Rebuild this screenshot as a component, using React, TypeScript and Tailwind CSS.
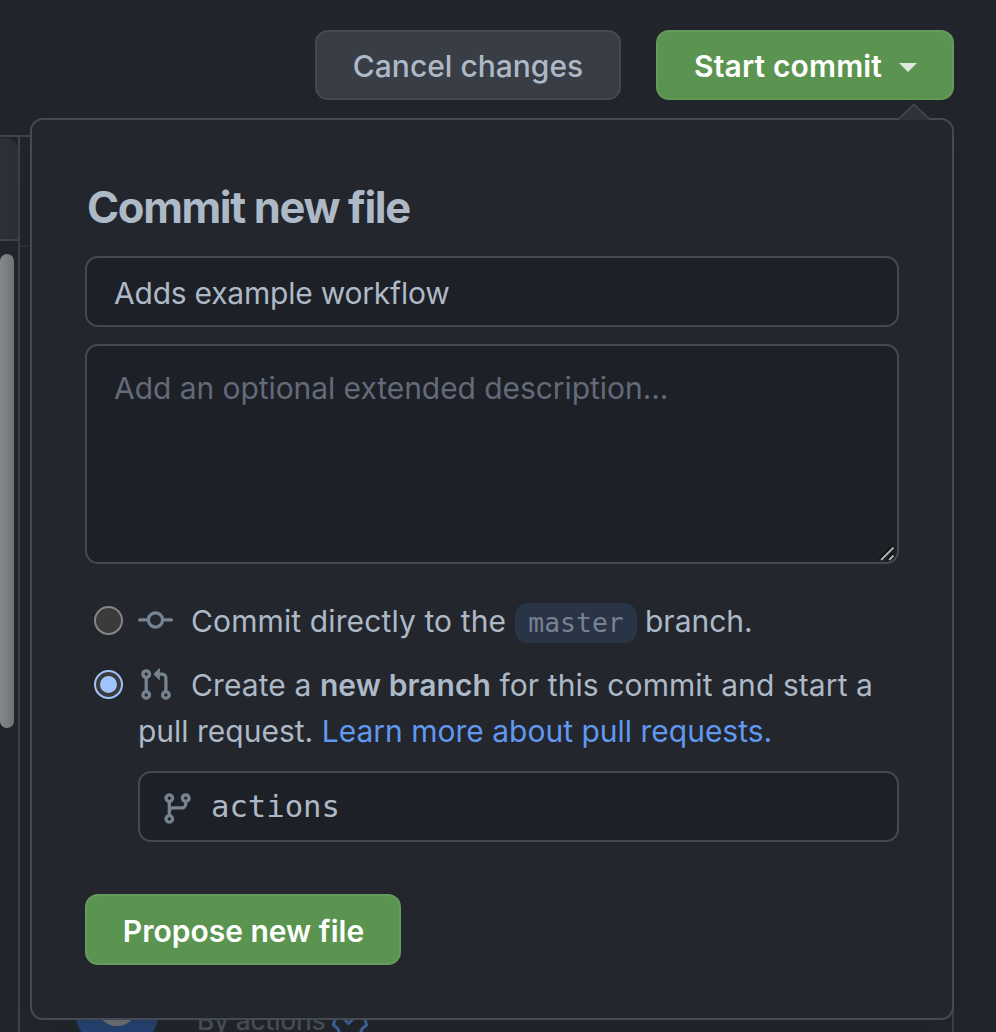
import type { ReactNode } from "react";

const icons = {
  commit:
    "M10.5 7.75a2.5 2.5 0 11-5 0 2.5 2.5 0 015 0zm1.43.75a4.002 4.002 0 01-7.86 0H.75a.75.75 0 110-1.5h3.32a4.001 4.001 0 017.86 0h3.32a.75.75 0 110 1.5h-3.32z",
  pullRequest:
    "M7.177 3.073L9.573.677A.25.25 0 0110 .854v4.792a.25.25 0 01-.427.177L7.177 3.427a.25.25 0 010-.354zM3.75 2.5a.75.75 0 100 1.5.75.75 0 000-1.5zm-2.25.75a2.25 2.25 0 113 2.122v5.256a2.251 2.251 0 11-1.5 0V5.372A2.25 2.25 0 011.5 3.25zM11 2.5h-1V4h1a1 1 0 011 1v5.628a2.251 2.251 0 101.5 0V5A2.5 2.5 0 0011 2.5zm1 10.25a.75.75 0 111.5 0 .75.75 0 01-1.5 0zM3.75 12a.75.75 0 100 1.5.75.75 0 000-1.5z",
  branch:
    "M11.75 2.5a.75.75 0 100 1.5.75.75 0 000-1.5zm-2.25.75a2.25 2.25 0 113 2.122V6A2.5 2.5 0 0110 8.5H6a1 1 0 00-1 1v1.128a2.251 2.251 0 11-1.5 0V5.372a2.25 2.25 0 111.5 0v1.836A2.492 2.492 0 016 7h4a1 1 0 001-1v-.628A2.25 2.25 0 019.5 3.25zM4.25 12a.75.75 0 100 1.5.75.75 0 000-1.5zM3.5 3.25a.75.75 0 111.5 0 .75.75 0 01-1.5 0z",
};

function Octicon({ path, className = "" }: { path: string; className?: string }) {
  return (
    <svg viewBox="0 0 16 16" className={`size-[35px] shrink-0 fill-[#768390] ${className}`}>
      <path fillRule="evenodd" d={path} />
    </svg>
  );
}

function Radio({ checked = false }: { checked?: boolean }) {
  return checked ? (
    <span className="flex size-[29px] shrink-0 items-center justify-center rounded-full border-2 border-[#9fc4fb] bg-[#3b3b3b]">
      <span className="size-[17px] rounded-full bg-[#9fc4fb]" />
    </span>
  ) : (
    <span className="size-[29px] shrink-0 rounded-full border-2 border-[#858585] bg-[#3b3b3b]" />
  );
}

function Field({ className, children }: { className: string; children: ReactNode }) {
  return (
    <div className={`rounded-[13px] border-2 border-[#444a54] bg-[#1d2026] ${className}`}>{children}</div>
  );
}

function EditorBackdrop() {
  return (
    <div className="flex h-[897px] w-[954px] border-t-2 border-r-2 border-[#40464f]">
      <div className="w-[20px] shrink-0 border-r-2 border-[#40464f]">
        <div className="h-[104px] border-b-2 border-[#40464f] pt-px">
          <div className="h-[101px] rounded-tr-[13px] bg-[#2d3139]" />
        </div>
        <div className="mt-[13px] h-[474px] w-[14px] rounded-t-[7px] rounded-b-[7px] bg-linear-to-r from-[#8b8c8e] to-[#7c7d7f]" />
      </div>
      <div className="flex grow flex-col justify-between">
        <div className="h-[110px] border-b-2 border-[#2f343c]" />
        <div className="flex h-[64px] pl-[55px]">
          <svg viewBox="0 0 84 84" className="size-[84px] shrink-0">
            <circle cx="42" cy="42" r="42" fill="#284a84" />
            <circle cx="42" cy="37" r="21" fill="#858585" />
          </svg>
          <span className="mt-[32px] ml-[38px] h-[40px] text-[26.4px] leading-[40px] font-medium tracking-[-0.3px] text-[#555c66]">By actions</span>
          <svg viewBox="0 0 24 24" className="mt-[31px] ml-[6px] size-[38px]" fill="none" stroke="#4674ba" strokeWidth="1.9" strokeLinejoin="round">
            <path d="M12 1.8l2.9 2.1 3.6.1 1.2 3.4 2.8 2.2-1 3.4 1 3.4-2.8 2.2-1.2 3.4-3.6.1-2.9 2.1-2.9-2.1-3.6-.1-1.2-3.4-2.8-2.2 1-3.4-1-3.4 2.8-2.2L5.500 4l3.600-.1z" />
            <path d="M8 12.500l3 3 5.500-5.500" strokeLinecap="round" />
          </svg>
        </div>
      </div>
    </div>
  );
}

function CommitPopover() {
  return (
    <section className="absolute top-[118px] left-[30px] flex h-[902px] w-[924px] flex-col rounded-[13px] border-2 border-[#444a54] bg-[#23262c] px-[53px] shadow-[0_16px_48px_#1c202666]">
      <svg viewBox="0 0 32 18" className="absolute -top-[17px] left-[866px] h-[17px] w-[32px]" preserveAspectRatio="none">
        <path d="M0 18L16 2l16 16z" fill="#2e323b" />
        <path d="M0 17.500L16 1.500l16 16" fill="none" stroke="#444a54" strokeWidth="1.500" />
      </svg>
      <h1 className="mt-[59px] h-[56px] text-[43.500px] leading-[56px] font-bold tracking-[-1.35px] text-[#adb9c7]">
        <span className="ml-[2px]">Commit new file</span>
      </h1>
      <Field className="mt-[21px] h-[71px] px-[27px]">
        <p className="leading-[70px] tracking-[-0.22px] text-[#adb9c7]">Adds example workflow</p>
      </Field>
      <Field className="relative mt-[17px] h-[220px] px-[27px] pt-[19px]">
        <p className="leading-[46px] tracking-[-0.06px] text-[#636a79]">Add an optional extended description...</p>
        <svg viewBox="0 0 16 16" className="absolute right-[2px] bottom-[1px] size-[16px]" fill="none">
          <path d="M1 15L14.500 1.500M9 15l5.500-5.500" stroke="#0c0d0f" strokeWidth="3.500" />
          <path d="M2 15L14.500 2.500M10 15l4.500-4.500" stroke="#b4b4b4" strokeWidth="1.800" />
        </svg>
      </Field>
      <div className="mt-[34px] flex h-[46px] items-start pl-[9px] leading-[46px] text-[#adb9c7]">
        <span className="mt-[8px] flex"><Radio /></span>
        <Octicon path={icons.commit} className="mt-[5px] ml-[15px]" />
        <span className="ml-[18px] w-[315px] tracking-[0.12px] whitespace-nowrap">Commit directly to the</span>
        <code className="mt-[5px] ml-[9px] flex h-[40px] w-[122px] items-center justify-center rounded-[13px] bg-[#293446] text-[26.400px] text-[#768390]">
          master
        </code>
        <span className="ml-[8px]">branch.</span>
      </div>
      <div className="mt-[18px] flex h-[92px] items-start pl-[9px] leading-[46px] text-[#adb9c7]">
        <span className="mt-[8px] flex"><Radio checked /></span>
        <div className="ml-[15px] flex flex-col whitespace-nowrap">
          <div className="flex h-[46px]">
            <Octicon path={icons.pullRequest} className="mt-[5px]" />
            <span className="ml-[18px] tracking-[0.09px]">
              Create a <b className="font-semibold">new branch</b> for this commit and start a
            </span>
          </div>
          <span>
            pull request. <a className="text-[#6198f0]">Learn more about pull requests.</a>
          </span>
        </div>
      </div>
      <Field className="mt-[17px] ml-[53px] flex h-[71px] items-center pl-[20px]">
        <Octicon path={icons.branch} className="mt-[4px]" />
        <code className="ml-[16px] text-[30.600px] text-[#adb9c7]">actions</code>
      </Field>
      <button className="mt-[52px] flex h-[71px] w-[316px] items-center justify-center rounded-[13px] border-2 border-[#659c5b] bg-[#5b9450] pt-[3px] pl-px font-semibold text-white">
        Propose new file
      </button>
    </section>
  );
}

export default function App() {
  return (
    <main className="relative h-[1032px] w-[996px] overflow-hidden bg-[#22262c] font-['Inter',sans-serif] text-[30px] font-[430] [&_code]:font-['DejaVu_Sans_Mono',monospace]">
      <header className="flex h-[135px] items-start justify-end gap-[35px] pt-[30px] pr-[42px]">
        <button className="h-[70px] w-[306px] rounded-[13px] border-2 border-[#444a54] bg-[#383d46] pt-[2px] font-medium text-[#adb9c7]">
          Cancel changes
        </button>
        <button className="flex h-[70px] w-[298px] items-center rounded-[13px] border-2 border-[#659c5b] bg-[#5b9450] pt-[2px] pl-[36px] font-semibold text-white">
          <span className="tracking-[0.15px]">Start commit</span>
          <svg viewBox="0 0 18 9" className="mt-[2px] ml-[17px] h-[9px] w-[18px]">
            <path d="M0 0h18L9 9z" fill="#dfe9dc" />
          </svg>
        </button>
      </header>
      <EditorBackdrop />
      <CommitPopover />
    </main>
  );
}
